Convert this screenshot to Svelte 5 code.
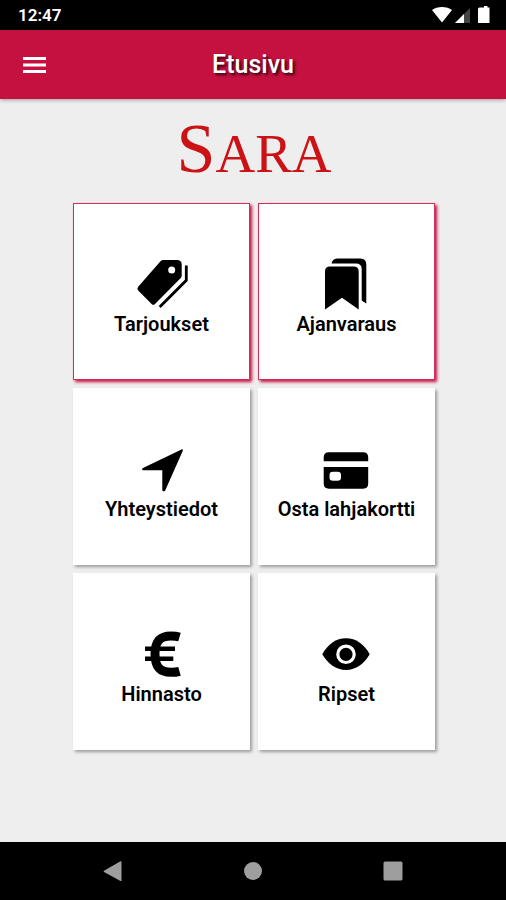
<script>
	const tiles = [
		{ icon: 'tags', label: 'Tarjoukset', highlight: true },
		{ icon: 'bookmarks', label: 'Ajanvaraus', highlight: true },
		{ icon: 'navigate', label: 'Yhteystiedot' },
		{ icon: 'card', label: 'Osta lahjakortti' },
		{ icon: 'euro', label: 'Hinnasto' },
		{ icon: 'eye', label: 'Ripset' }
	];
</script>

<div class="screen">
	<!-- Android status bar -->
	<div class="status">
		<span class="time">12:47</span>
		<svg class="status-icons" viewBox="0 0 58 18" width="58" height="18" aria-hidden="true">
			<path d="M0 4C5 0 15 0 20 4L10 16.500z" fill="#fff" />
			<path d="M38 2v15H23z" fill="#444" />
			<path d="M32 8v9h-9z" fill="#fff" />
			<path d="M49 1.500h3V0h3.500v1.500h2V17H46V3q0-1.500 1.500-1.500z" fill="#fff" />
		</svg>
	</div>

	<header class="toolbar">
		<button class="menu" aria-label="Valikko">
			<svg viewBox="0 0 23 16" width="23" height="16">
				<path d="M0 0h23v3H0zM0 6.500h23v3H0zM0 13h23v3H0z" fill="#fff" />
			</svg>
		</button>
		<h1>Etusivu</h1>
	</header>

	<main>
		<div class="logo"><span class="initial">S</span>ARA</div>

		<div class="grid">
			{#each tiles as tile}
				<button class="tile" class:highlight={tile.highlight}>
					<svg class="icon" viewBox="0 0 52 52" width="52" height="52" aria-hidden="true">
						{#if tile.icon === 'tags'}
							<path
								fill-rule="evenodd"
								d="M27 2H41Q45.700 2 45.700 6.500V17.500Q45.700 19 44.500 20.200L19 46Q17.300 47.700 15.600 46L2.200 32.500Q.5 30.700 2.200 28.800L24.500 3.300Q25.700 2 27 2zM35.700 8.500a3.500 3.500 0 1 0 0 7a3.500 3.500 0 0 0 0-7z"
							/>
							<path d="M50.300 7.500V22.300L23.700 49" fill="none" stroke="#000" stroke-width="2.800" />
						{:else if tile.icon === 'bookmarks'}
							<path d="M9 8.500H32.500Q37.700 8.500 37.700 13.500V51.500L21 39.700L4 51.500V13.500Q4 8.500 9 8.500z" />
							<path d="M10.500 5.500Q11.500.5 17 .5H39.500Q45.300.5 45.300 6.500V45.500L40.700 42.500V11Q40.700 5.500 35 5.500z" />
						{:else if tile.icon === 'navigate'}
							<path d="M46 6.200Q47.500 6.500 46.700 8L29.300 47.300Q29 48.200 28 48.200H27.300Q26.300 48.200 26.300 47V27.300H7.200Q6 27.300 6 26.500T7 25z" />
						{:else if tile.icon === 'card'}
							<path d="M2.700 18.300V14.500Q2.700 9.300 8 9.300H42Q47.200 9.300 47.200 14.500V18.300z" />
							<path
								fill-rule="evenodd"
								d="M2.700 24H47.200V40.500Q47.200 45.700 42 45.700H8Q2.700 45.700 2.700 40.500zM12 28.700Q8.500 28.700 8.500 32V34.400Q8.500 37.700 12 37.700H16.500Q20 37.700 20 34.400V32Q20 28.700 16.500 28.700z"
							/>
						{:else if tile.icon === 'euro'}
							<path d="M43.500 9Q40 8 35 8C23 8 19 14 19 26S23 44.300 35 44.300Q40 44.300 43.500 43.300" fill="none" stroke="#000" stroke-width="9" />
							<path d="M9 20.800H39M9 30.800H37.300" fill="none" stroke="#000" stroke-width="4.400" />
						{:else}
							<path d="M1.300 26.300C7 16 15 10.300 25 10.300S43 16 48.700 26.300C43 36 35 42 25 42S7 36 1.300 26.300z" />
							<circle cx="25" cy="26.300" r="8.200" fill="none" stroke="#fff" stroke-width="3.200" />
						{/if}
					</svg>
					<span class="label">{tile.label}</span>
				</button>
			{/each}
		</div>
	</main>

	<!-- Android navigation bar -->
	<nav class="navbar">
		<button aria-label="Takaisin">
			<svg viewBox="0 0 20 20" width="20" height="20"><path d="M18.500 1V19.500Q18.500 20.500 17.500 20L1 11Q.3 10.300 1 9.700L17.500.2Q18.500 0 18.500 1z" /></svg>
		</button>
		<button aria-label="Koti">
			<svg viewBox="0 0 20 20" width="20" height="20"><circle cx="10" cy="10" r="9" /></svg>
		</button>
		<button aria-label="Viimeisimmät">
			<svg viewBox="0 0 20 20" width="20" height="20"><rect x=".5" y=".5" width="19" height="19" rx="1.500" /></svg>
		</button>
	</nav>
</div>

<style>
	:global(body) {
		margin: 0;
		background: #eee;
	}

	.screen {
		min-height: 100vh;
		display: flex;
		flex-direction: column;
		font-family: Roboto, 'Liberation Sans', sans-serif;
		background: #eee;
	}

	button {
		margin: 0;
		padding: 0;
		border: 0;
		background: none;
		font-family: inherit;
		cursor: pointer;
	}

	svg {
		display: block;
	}

	.status {
		height: 30px;
		box-sizing: border-box;
		padding: 0 16px 0 18px;
		display: flex;
		align-items: center;
		justify-content: space-between;
		background: #000;
	}

	.time {
		color: #fff;
		font-size: 17px;
		font-weight: 600;
		line-height: 34px;
	}

	.toolbar {
		height: 69px;
		box-sizing: border-box;
		padding: 1px 23px 0;
		display: grid;
		grid-template-columns: 24px 1fr 24px;
		align-items: center;
		background: #c5113f;
		box-shadow: 0 1px 4px rgba(0, 0, 0, 0.35);
	}

	h1 {
		margin: 0;
		color: #fff;
		font-size: 25px;
		font-weight: 500;
		line-height: 32px;
		text-align: center;
		text-shadow: 2px 2px 3px rgba(0, 0, 0, 0.8);
	}

	main {
		flex: 1;
		padding: 10px 71px 24px 73px;
	}

	.logo {
		margin-bottom: 9px;
		color: #cb1214;
		font-family: 'Liberation Serif', serif;
		font-size: 55px;
		line-height: 80px;
		text-align: center;
	}

	.initial {
		font-size: 70px;
	}

	.grid {
		display: grid;
		grid-template-columns: 1fr 1fr;
		gap: 8px;
	}

	.tile {
		box-sizing: border-box;
		aspect-ratio: 1;
		padding-top: 11px;
		display: flex;
		flex-direction: column;
		align-items: center;
		justify-content: center;
		gap: 2px;
		background: #fff;
		color: #000;
		box-shadow: 2px 2px 3px rgba(0, 0, 0, 0.35);
	}

	.highlight {
		border: 1px solid #d0305a;
		box-shadow: 2px 2px 3px #c5113f;
	}

	.label {
		font-size: 20px;
		font-weight: 600;
		line-height: 24px;
		white-space: nowrap;
	}

	.navbar {
		height: 58px;
		padding: 0 43px;
		display: grid;
		grid-template-columns: repeat(3, 1fr);
		justify-items: center;
		align-items: center;
		background: #000;
	}

	.navbar svg {
		fill: #9e9e9e;
	}
</style>
